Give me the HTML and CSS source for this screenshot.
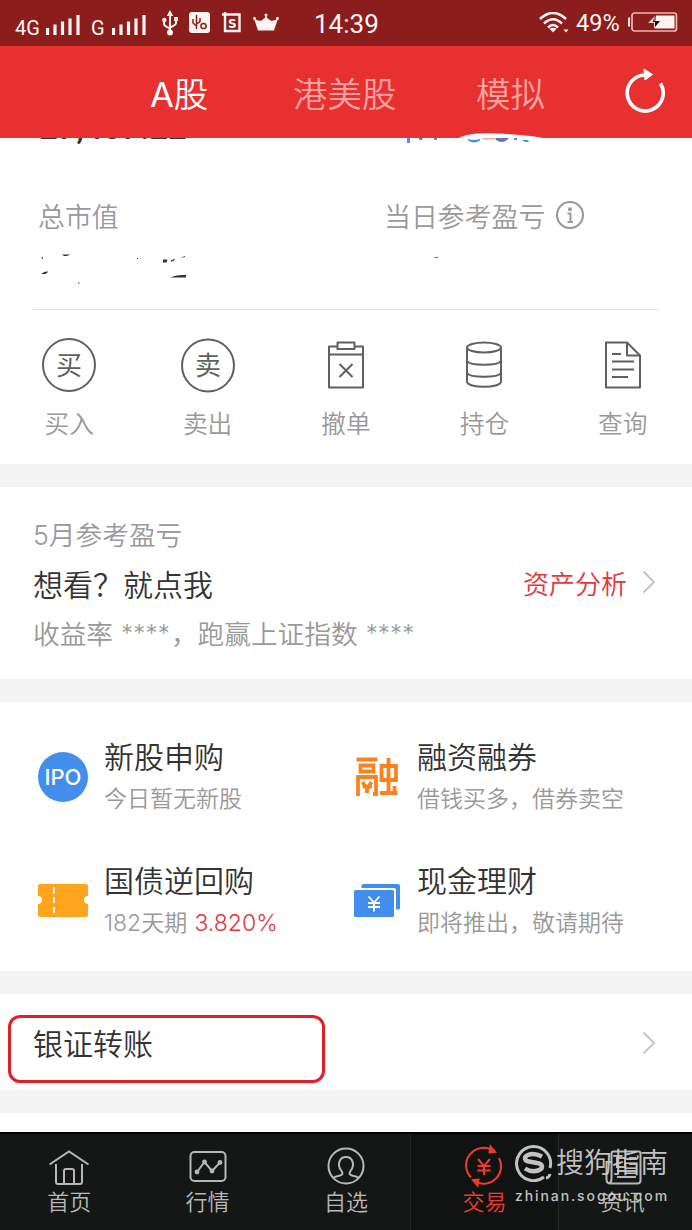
FILE: index.html
```html
<!DOCTYPE html>
<html lang="zh-CN">
<head>
<meta charset="utf-8">
<title>交易</title>
<link rel="stylesheet" href="styles.css">
</head>
<body>
<div class="screen">
  <div class="status">
    <div class="status-left">
      <span class="net net-4g">4G</span>
      <svg class="bars" width="34" height="22" viewBox="0 0 34 22"><path d="M1.5 14v7M9 10.500v10.500M16.500 7.500v13.500M24 4.500v16.500M32 1v20" stroke="#fff4ef" stroke-width="3.200"/></svg>
      <span class="net net-g">G</span>
      <svg class="bars" width="34" height="22" viewBox="0 0 34 22"><path d="M1.500 14v7M9 10.500v10.500M16.500 7.500v13.500M24 4.500v16.500M32 1v20" stroke="#fff4ef" stroke-width="3.200"/></svg>
      <svg class="usb" width="16" height="26" viewBox="0 0 16 26"><path d="M8 4v18M2 9v5q0 2 6 4.500M14 8v5q0 2-6 4.500" fill="none" stroke="#fff4ef" stroke-width="2"/><path d="M8 0l3.200 6H4.800z" fill="#fff4ef"/><circle cx="2.300" cy="10" r="2.200" fill="#fff4ef"/><path d="M12 7h4v4h-4z" fill="#fff4ef"/><circle cx="8" cy="22.500" r="3" fill="#fff4ef"/></svg>
      <svg class="app" width="21" height="21" viewBox="0 0 21 21"><rect width="21" height="21" rx="3" fill="#fff4ef"/><g fill="none" stroke="#8b1d1d" stroke-width="1.500"><path d="M7.500 3v14M4 7v4l3.500 3M11 6v3.500L7.500 12"/><circle cx="14.500" cy="14" r="2.600"/></g></svg>
      <svg class="sbox" width="20" height="21" viewBox="0 0 20 21"><path d="M0 2.500h17.500v16.500H3V0" fill="none" stroke="#fff4ef" stroke-width="2.400"/><text x="10.300" y="15.500" class="s-letter">S</text></svg>
      <svg class="crown" width="26" height="19" viewBox="0 0 26 19"><path d="M1 5.500q4.500 3 7.500 2L13 4l4.500 3.500q3 1 7.500-2l-4 12H5z" fill="#fff4ef"/><path d="M13 2v4" stroke="#fff4ef" stroke-width="1.500"/><circle cx="13" cy="2" r="1.500" fill="#fff4ef"/><circle cx="1.500" cy="5.500" r="1.400" fill="#fff4ef"/><circle cx="24.500" cy="5.500" r="1.400" fill="#fff4ef"/></svg>
    </div>
    <div class="clock">14:39</div>
    <div class="status-right">
      <svg width="30" height="21" viewBox="0 0 30 21"><g fill="none" stroke="#fff4ef" stroke-width="2.500"><path d="M1 7q13-12 26 0M5 11.500q9-8.500 18 0M9 15.500q5-5 10 0"/></g><path d="M10.500 16.800q3.500-2 7 0L14 20.500zM24.500 17.500h5L27 20.500z" fill="#fff4ef"/></svg>
      <span class="pct">49%</span>
      <svg width="50" height="20" viewBox="0 0 50 20"><rect x="4" y="1" width="44.500" height="18" rx="2.500" fill="none" stroke="#f3b5ae" stroke-width="1.700"/><path d="M0 6.500q0-1.200 2-1.200v9.400q-2 0-2-1.200z" fill="#fff4ef"/><path d="M28 3.500h18.500v13H26.500z" fill="#fff4ef"/><path d="M20 11l7-7v5h5l-6 7v-5z" fill="#f3d0cb"/><path d="M26.500 4v5h5.500l-5 6v-5h-2z" fill="#180909"/></svg>
    </div>
  </div>

  <header class="header">
    <nav class="markets"><span class="market active"><span class="num">A</span>股</span><span class="market hk">港美股</span><span class="market sim">模拟</span></nav>
    <svg class="refresh" width="42" height="44" viewBox="0 0 42 44"><path d="M36.500 14.500A18 18 0 1 1 21 6" fill="none" stroke="#fff" stroke-width="3.600"/><path d="M20 0l8.500 5.500-7.500 5.500z" fill="#fff" stroke="#fff" stroke-linejoin="round"/></svg>
  </header>

  <section class="assets">
    <div class="clipped"><span class="amount">27,407.22</span></div>
    <svg class="erased-top" width="150" height="13" viewBox="0 0 150 13"><path d="M58 7Q68 0 98 1.500Q132 3 148 7v3H55z" fill="#fff"/><path d="M8 6h3v5H8zM20 6h4l-1 2h-3zM35 6h3v2h-3z" fill="#4a90e8"/><path d="M69 7q6 2 12 0v1.500q-6 4-12 0z" fill="#4a90e8"/><path d="M84 6h13v1.500H84z" fill="#e8aa93"/><path d="M97 6h13q-6 7-13 2z" fill="#6a70bd"/><path d="M115 6h3v2h-3zM123 8h6l1 2h-4z" fill="#4a90e8"/></svg>
    <div class="asset-labels">
      <span class="label-value">总市值</span>
      <span class="label-day">当日参考盈亏</span>
      <svg width="28" height="28" viewBox="0 0 28 28"><circle cx="14" cy="14" r="13" fill="none" stroke="#999" stroke-width="2.200"/><circle cx="14" cy="8.300" r="2" fill="#999"/><path d="M11.500 12.500h3v8M11.500 21h5.500" fill="none" stroke="#999" stroke-width="2"/></svg>
    </div>
    <svg class="erased" width="626" height="34" viewBox="0 0 626 34"><g fill="#333"><path d="M8 5l2-1v2zM29 1.500h8q-3 2-6 1.500zM8 21q3-3 7-2.500-1 3-6 2.500zM45 29.500h1.500v1H45zM104 5h1v1h-1zM130 6.500h4.500l-1 3H130zM138 7.500l4-2-1 2-3 1.500zM147 5l5-2v1z"/><path d="M138 24.500q4-3 15-2.500v2.500z"/></g><path d="M400 5h5v-1h-2z" fill="#666"/></svg>
    <div class="actions">
      <div class="action"><svg width="56" height="56" viewBox="0 0 56 56"><circle cx="28" cy="28" r="26" class="line"/><text x="28" y="38" class="circle-word">买</text></svg><span>买入</span></div>
      <div class="action"><svg width="56" height="56" viewBox="0 0 56 56"><circle cx="28" cy="28.500" r="26" class="line"/><text x="28" y="38" class="circle-word">卖</text></svg><span>卖出</span></div>
      <div class="action"><svg width="56" height="56" viewBox="0 0 56 56"><path d="M19.500 9.500h-8.500v41h34v-41h-8.500M11 17.500h34M19.500 5.500h17v6.500h-17zM21.500 27l13 13M34.500 27l-13 13" class="line"/></svg><span>撤单</span></div>
      <div class="action"><svg width="56" height="56" viewBox="0 0 56 56"><ellipse cx="28" cy="10.500" rx="17" ry="5" class="line"/><path d="M11 10.500v34c0 7 34 7 34 0v-34M11 24c3 5 31 5 34 0M11 36c3 5 31 5 34 0" class="line"/></svg><span>持仓</span></div>
      <div class="action"><svg width="56" height="56" viewBox="0 0 56 56"><path d="M11 5.500h21l13 13v32H11zM32 5.500v13h13M17 17h9M17 24.500h22M17 32.500h22M17 40h16" class="line"/></svg><span>查询</span></div>
    </div>
  </section>

  <section class="profit">
    <div class="profit-month"><span class="num">5</span>月参考盈亏</div>
    <div class="profit-main"><span class="want">想看？就点我</span><span class="analysis">资产分析</span><svg width="14" height="24" viewBox="0 0 14 24"><path d="M1.500 1.500L12 12 1.500 22.500" class="chevron"/></svg></div>
    <div class="profit-rate">收益率 <i>****</i>，跑赢上证指数 <i>****</i></div>
  </section>

  <section class="products">
    <div class="product">
      <div class="product-icon"><svg width="52" height="52" viewBox="0 0 52 52"><circle cx="26" cy="26" r="25" fill="#438eec"/><text x="26" y="34" class="ipo">IPO</text></svg></div>
      <div><h2>新股申购</h2><p>今日暂无新股</p></div>
    </div>
    <div class="product">
      <div class="product-icon"><svg width="52" height="52" viewBox="0 0 52 52"><g fill="none" stroke="#fb831f" stroke-width="3.800" transform="translate(1.500 0)"><path d="M5 8.500h21M9 14.500h13v6H9zM6.500 45V26H24.500V43h-3M11 31l2.500 4M20 31l-2.500 4M11 35.500h9.500M15.500 35v7M30 15h14.500v14H30zM37 7v34M28.500 42H46M43 35v9"/></g></svg></div>
      <div><h2>融资融券</h2><p>借钱买多，借券卖空</p></div>
    </div>
    <div class="product">
      <div class="product-icon"><svg width="52" height="52" viewBox="0 0 52 52"><path d="M3 9h46q2 0 2 2v10a4 4 0 0 0 0 8v11q0 2-2 2H3q-2 0-2-2V29a4 4 0 0 0 0-8V11q0-2 2-2z" fill="#ffa41d"/><path d="M17 12.500v6M17 22.500v5M17 32v6" stroke="#fff" stroke-width="2"/></svg></div>
      <div><h2>国债逆回购</h2><p><span class="num">182</span>天期 <b class="num rate">3.820%</b></p></div>
    </div>
    <div class="product">
      <div class="product-icon"><svg width="52" height="52" viewBox="0 0 52 52"><path d="M13.500 9H48q2 0 2 2v22q0 1.500-2 1.500h-2V15q0-2-2-2H11.500v-2q0-2 2-2z" fill="#438eec"/><rect x="4" y="15" width="40" height="27" rx="1.500" fill="#438eec"/><path d="M18.500 21.500l5.500 6 5.500-6M24 27v9.500M18 28h12M18 32h12" fill="none" stroke="#fff" stroke-width="1.800"/></svg></div>
      <div><h2>现金理财</h2><p>即将推出，敬请期待</p></div>
    </div>
  </section>

  <section class="transfer">
    <span class="transfer-box">银证转账</span>
    <svg width="14" height="24" viewBox="0 0 14 24"><path d="M1.500 1.500L12 12 1.500 22.500" class="chevron"/></svg>
  </section>
  <section class="next"></section>

  <footer class="tabs">
    <div class="tab"><svg width="44" height="44" viewBox="0 0 44 44"><path d="M2.500 20.500L22 7.500l19.500 13M9 20v18q0 2 2 2h22q2 0 2-2V20M17 40V27q0-2 2-2h6q2 0 2 2v13"/></svg><span>首页</span></div>
    <div class="tab"><svg width="44" height="44" viewBox="0 0 44 44"><rect x="4.500" y="8" width="35" height="29" rx="4"/><path d="M11 28l7.500-10L26 27l8-8.500"/><g fill="#b8b8b8" stroke="none"><circle cx="11" cy="28" r="2.400"/><circle cx="18.500" cy="18" r="2.400"/><circle cx="26" cy="27" r="2.400"/><circle cx="34" cy="18.500" r="2.400"/></g></svg><span>行情</span></div>
    <div class="tab"><svg width="44" height="44" viewBox="0 0 44 44"><circle cx="22" cy="22" r="17.500"/><path d="M9 34q2-1.500 7-2.500c3-.7 3-2.500 1.500-4.500C12.500 20.500 15.500 13 22 13s9.500 7.500 4.500 14c-1.500 2-1.500 3.800 1.500 4.500q5 1 7 2.500"/></svg><span>自选</span></div>
    <div class="tab current"><svg width="44" height="44" viewBox="0 0 44 44"><path d="M30 6A17.500 17.500 0 0 0 9 33.500M14 38A17.500 17.500 0 0 0 37 14M16 15l6 7 6-7M22 22v9M15.500 22h13M15.500 26.500h13"/><path d="M28.500 2.500l4.500 5.500-5.500.5zM15.500 41.500l-4.500-5.500 5.500-.5z" fill="#ef3b2c"/></svg><span>交易</span></div>
    <div class="tab"><svg width="44" height="44" viewBox="0 0 44 44"><path d="M12.500 7.500h25q2 0 2 2v27q0 3-3 3H9.500q-4 0-4-4V18h5M10.500 9.500V35q0 4-2.500 4.500M10.500 9.500q0-2 2-2M16 14h8v9h-8zM28 14h7M28 20h7M16 27h19M16 33h19"/></svg><span>资讯</span></div>
    <div class="watermark">
      <div class="wm-brand"><svg width="38" height="38" viewBox="0 0 38 38"><path d="M29 33A17 17 0 1 1 35 24" fill="none" stroke="#ccc" stroke-width="3"/><path d="M27 12.500q-8-4-14-1.500c-5 2-3 6 1 6.500l8 1.500c7 1 6 6 1 7.500q-7 2-13-2" fill="none" stroke="#ccc" stroke-width="4.500"/><path d="M31 34q3 0 4-4" stroke="#ccc" stroke-width="3" fill="none"/></svg><span>搜狗指南</span></div>
      <div class="wm-url">zhinan.sogou.com</div>
    </div>
  </footer>
</div>
</body>
</html>
```
FILE: styles.css
```css
* { box-sizing: border-box; }
body { margin: 0; background: #f3f3f3; font-family: "Noto Sans CJK SC", sans-serif; font-weight: 350; }
svg { display: block; flex: none; }
.screen { width: 692px; height: 1230px; overflow: hidden; display: flex; flex-direction: column; }
.num { font-family: Inter, sans-serif; font-weight: 300; line-height: 1; }

.status { height: 46px; flex: none; background: #8b1d1d; color: #fff4ef; display: grid; grid-template-columns: 314px 1fr 153px; font-family: Roboto, sans-serif; font-weight: 400; }
.status-left { display: flex; align-items: center; padding-left: 15px; }
.net { font-size: 20px; line-height: 42px; padding-top: 6px; }
.net-4g { width: 31px; }
.net-g { width: 21px; margin-left: 11px; }
.bars { margin-top: 1px; }
.usb { margin-left: 16px; }
.app { margin-left: 11px; }
.sbox { margin-left: 12px; }
.crown { margin-left: 11px; }
.usb, .app, .sbox, .crown { margin-top: -4px; }
.s-letter { font: 700 12px "DejaVu Sans", sans-serif; fill: #fff4ef; text-anchor: middle; }
.clock { font-size: 26px; line-height: 49px; }
.status-right { display: flex; align-items: center; padding-bottom: 5px; }
.pct { font-size: 23.500px; line-height: 41px; width: 52px; padding-top: 2px; margin-right: 0; margin-left: 7px; }

.header { height: 92px; flex: none; background: #e83030; display: flex; align-items: center; justify-content: space-between; padding: 0 26px 0 150px; }
.markets { display: flex; font-size: 34.500px; line-height: 90px; }
.market { color: #f9a3a0; white-space: nowrap; }
.market.active { color: #fff; width: 143px; }
.market.active .num { font-weight: 400; }
.market.hk { width: 183px; }
.refresh { margin-top: -2px; }

.assets { height: 326px; flex: none; background: #fff; position: relative; padding: 0 33px; }
.clipped { height: 10px; overflow: hidden; display: flex; align-items: flex-end; padding: 0 0 7px 6px; }
.amount { font: 500 33px/26px Roboto, sans-serif; color: #333; }
.erased-top { position: absolute; left: 399px; top: -6px; }
.asset-labels { display: flex; align-items: center; height: 40px; margin-top: 48px; padding: 0 0 4px 6px; font-size: 26.900px; line-height: 40px; color: #999; }
.label-value, .label-day { padding-top: 4px; margin-left: -1px; }
.label-value { width: 347px; }
.label-day { width: 172px; white-space: nowrap; }
.asset-labels svg { margin-top: 2px; }
.erased { margin-top: 17px; }
.actions { margin: 22px -33px 0; padding-top: 28px; display: grid; grid-template-columns: repeat(5, 1fr); position: relative; }
.actions::before { content: ""; position: absolute; left: 33px; right: 33px; top: 0; height: 1px; background: #e2e2e2; }
.action { display: flex; flex-direction: column; align-items: center; font-size: 24.700px; line-height: 36px; color: #999; gap: 11px; }
.line { fill: none; stroke: #606060; stroke-width: 2; stroke-linejoin: round; }
.circle-word { font-size: 26px; font-weight: 400; text-anchor: middle; fill: #606060; }

.profit { height: 192px; flex: none; background: #fff; margin-top: 23px; padding: 27px 36px 0 33px; color: #999; font-size: 26.700px; }
.profit-month { line-height: 40px; }
.profit-main { display: flex; align-items: center; line-height: 50px; height: 50px; padding-top: 6px; }
.want { font-size: 30px; color: #333; flex: 1; padding-top: 1px; }
.analysis { font-size: 26px; color: #e5353a; margin-right: 15px; padding-top: 1px; }
.chevron { fill: none; stroke: #c5c5c5; stroke-width: 2; }
.profit-rate { line-height: 50px; margin-top: 4px; white-space: nowrap; }
.profit-rate i { font: 300 24px/1 Inter, sans-serif; letter-spacing: .2px; margin: 0 1px 0 2px; vertical-align: 2px; }

.products { height: 269px; flex: none; background: #fff; margin-top: 23px; padding: 31px 0 0 37px; display: grid; grid-template-columns: 313px 1fr; grid-auto-rows: 124px; }
.product { display: flex; }
.product-icon { padding-top: 18px; width: 67px; flex: none; }
h2 { margin: 0; font-size: 30px; line-height: 44px; font-weight: 350; color: #333; }
p { margin: 0; font-size: 23px; line-height: 40px; color: #999; white-space: nowrap; }
.rate { color: #e5353a; margin-left: 2px; }
.ipo { font: 500 22px Inter, sans-serif; text-anchor: middle; fill: #fff; }

.transfer { height: 96px; flex: none; background: #fff; margin-top: 23px; padding: 21px 36px 0 8px; display: flex; justify-content: space-between; }
.transfer-box { width: 317px; height: 68px; border: 3px solid #df2029; border-radius: 12px; padding-left: 22px; font-size: 30px; line-height: 48px; color: #333; }
.transfer svg { margin-top: 16px; }
.next { height: 19px; flex: none; background: #fff; margin-top: 23px; }

.tabs { height: 98px; flex: none; background: #151717; border-top: 2px solid #000; position: relative; display: grid; grid-template-columns: repeat(5, 1fr); }
.tab { display: flex; flex-direction: column; align-items: center; padding-top: 10px; color: #b8b8b8; font-size: 22px; line-height: 24px; }
.tab svg { fill: none; stroke: currentColor; stroke-width: 2; }
.tab.current { color: #ef3b2c; background: #111313; margin: 0 -5px; border: solid #242626; border-width: 0 1px; }
.watermark { position: absolute; left: 515px; top: 9px; color: #ccc; opacity: .95; }
.wm-brand { display: flex; align-items: center; height: 40px; gap: 3px; font-size: 28px; line-height: 36px; padding-bottom: 1px; white-space: nowrap; }
.wm-brand span { margin-top: -3px; }
.wm-url { font: 500 14px/26px Inter, sans-serif; letter-spacing: 1.900px; }
```
